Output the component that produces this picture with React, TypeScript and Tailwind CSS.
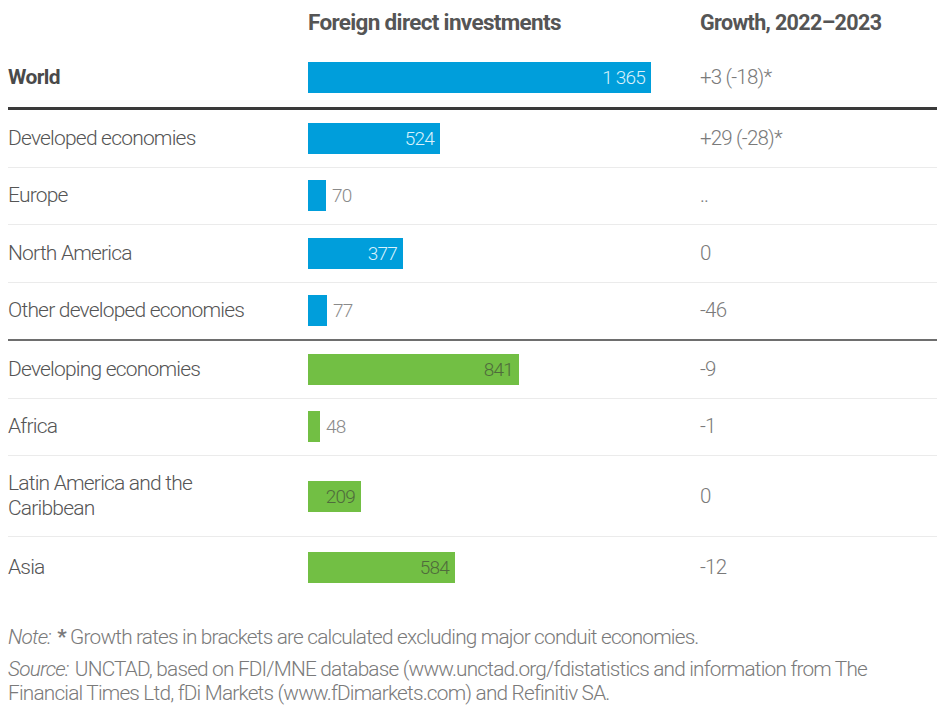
const rows = [
  { label: 'Developed economies', value: 524, growth: '+29 (-28)*', color: 'blue', h: 'h-[57.5px]' },
  { label: 'Europe', value: 70, growth: '..', color: 'blue', h: 'h-[57.5px]' },
  { label: 'North America', value: 377, growth: '0', color: 'blue', h: 'h-[57.5px]' },
  { label: 'Other developed economies', value: 77, growth: '-46', color: 'blue', h: 'h-[58.5px]', last: true },
  { label: 'Developing economies', value: 841, growth: '-9', color: 'green', h: 'h-[57.5px]' },
  { label: 'Africa', value: 48, growth: '-1', color: 'green', h: 'h-[57.5px]' },
  { label: 'Latin America and the Caribbean', value: 209, growth: '0', color: 'green', h: 'h-[81px]', tall: true },
  { label: 'Asia', value: 584, growth: '-12', color: 'green', h: 'h-[60px]', end: true },
];

const SCALE = 343 / 1365;

const Bar = ({ value, color }: { value: number; color: string }) => {
  const width = Math.round(value * SCALE);
  const inside = width > 40;
  const fill = color === 'blue' ? 'bg-[#009edb]' : 'bg-[#72bf44]';
  const insideText = color === 'blue' ? 'text-[#d9f1fb]' : 'text-[#4f6b3c]';
  return (
    <div className="flex items-center h-[31px]">
      <div className={`${fill} h-full flex items-center justify-end pr-1.5`} style={{ width }}>
        {inside && <span className={`${insideText} text-[19px] leading-none`}>{value}</span>}
      </div>
      {!inside && <span className="ml-1.5 text-[19px] leading-none text-[#8a8a8a]">{value}</span>}
    </div>
  );
};

export default function App() {
  return (
    <div className="w-[947px] h-[716px] bg-white pt-0.5 pl-2 pr-[10px] font-['Roboto',sans-serif] font-light tracking-[-0.05em] text-[#555]">
      {/* header */}
      <div className="grid grid-cols-[300px_392px_1fr] h-[48px] items-center pb-1.5">
        <div />
        <div className="font-bold text-[22.5px] text-[#555] tracking-[-0.03em]">Foreign direct investments</div>
        <div className="font-bold text-[21.5px] text-[#555] tracking-[-0.03em]">Growth, 2022–2023</div>
      </div>

      {/* world */}
      <div className="grid grid-cols-[300px_392px_1fr] h-[60px] items-center border-b-[3px] border-[#3a3a3a] pb-0.5">
        <div className="font-bold text-[21px] text-[#4a4a4a] tracking-[-0.03em]">World</div>
        <div className="flex items-center h-[31px]">
          <div className="bg-[#009edb] h-full w-[343px] flex items-center justify-end pr-1.5">
            <span className="text-[#d9f1fb] text-[19px] leading-none">1 365</span>
          </div>
        </div>
        <div className="text-[20.5px] text-[#7a7a7a]">+3 (-18)*</div>
      </div>

      {rows.map((r) => (
        <div
          key={r.label}
          className={`grid grid-cols-[300px_392px_1fr] items-center ${r.h} ${
            r.end ? '' : r.last ? 'border-b-2 border-[#6e6e6e]' : 'border-b border-[#ebebeb]'
          }`}
        >
          <div className={`text-[21px] leading-[25px] text-[#555] ${r.tall ? 'w-[200px]' : ''}`}>{r.label}</div>
          <Bar value={r.value} color={r.color} />
          <div className="text-[20.5px] text-[#7a7a7a]">{r.growth}</div>
        </div>
      ))}

      {/* notes */}
      <div className="mt-[28px] text-[20.8px] leading-[24px] text-[#7a7a7a]">
        <p>
          <span className="italic pr-[2px]">Note:</span> <span className="font-bold">*</span> Growth rates in brackets are calculated excluding major conduit economies.
        </p>
        <p className="mt-2 w-[880px]">
          <span className="italic pr-[2px]">Source:</span> UNCTAD, based on FDI/MNE database (www.unctad.org/fdistatistics and information from The Financial Times Ltd, fDi Markets (www.fDimarkets.com) and Refinitiv SA.
        </p>
      </div>
    </div>
  );
}
